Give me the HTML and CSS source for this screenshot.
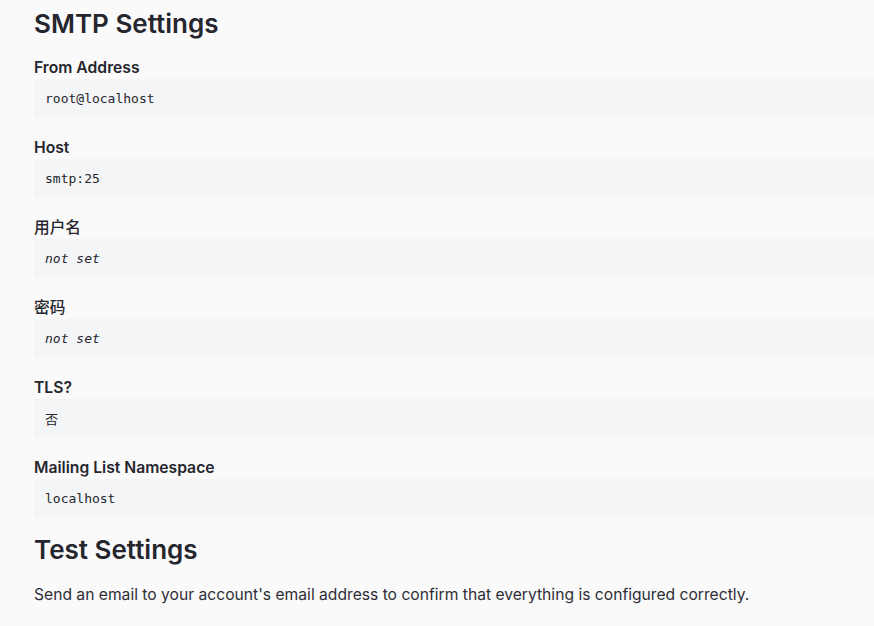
FILE: index.html
```html
<!DOCTYPE html>
<html lang="zh-CN">
<head>
  <meta charset="UTF-8">
  <meta name="viewport" content="width=device-width, initial-scale=1.0">
  <title>SMTP Settings</title>
  <link rel="stylesheet" href="styles.css">
</head>
<body>
  <div class="page">
    <h2 class="title">SMTP Settings</h2>
    <dl class="settings">
      <dt>From Address</dt>
      <dd><code>root@localhost</code></dd>
      <dt>Host</dt>
      <dd><code>smtp:25</code></dd>
      <dt class="cjk">用户名</dt>
      <dd><code><i>not set</i></code></dd>
      <dt class="cjk">密码</dt>
      <dd><code><i>not set</i></code></dd>
      <dt>TLS?</dt>
      <dd><code>否</code></dd>
      <dt>Mailing List Namespace</dt>
      <dd><code>localhost</code></dd>
    </dl>
    <h2 class="title">Test Settings</h2>
    <p class="note">Send an email to your account's email address to confirm that everything is configured correctly.</p>
  </div>
</body>
</html>
```

FILE: styles.css
```css
html, body { margin: 0; padding: 0; overflow: hidden; }
body { background: #fafafa; color: #26262e; font-family: Inter, "Noto Sans CJK SC", sans-serif; }
.page { padding: 0 0 0 34px; }
.title { margin: 0; padding-top: 6px; height: 36px; font-size: 26px; font-weight: 600; line-height: 36px; }
.settings { margin: 0; padding-top: 15px; }
.settings dt { font-size: 15.7px; font-weight: 600; line-height: 22px; height: 22px; }
.settings dt.cjk { font-weight: 500; }
.settings dd { margin: 0 0 20px 0; height: 38px; background: #f4f5f7; display: flex; align-items: center; padding-left: 11px; }
.settings dd:last-child { margin-bottom: 9px; }
.settings code { font-family: "DejaVu Sans Mono", "Noto Sans CJK SC", monospace; font-size: 13px; color: #26262e; }
.note { margin: 17px 0 0; font-size: 15.65px; line-height: 20px; color: #2e2e36; }
```
